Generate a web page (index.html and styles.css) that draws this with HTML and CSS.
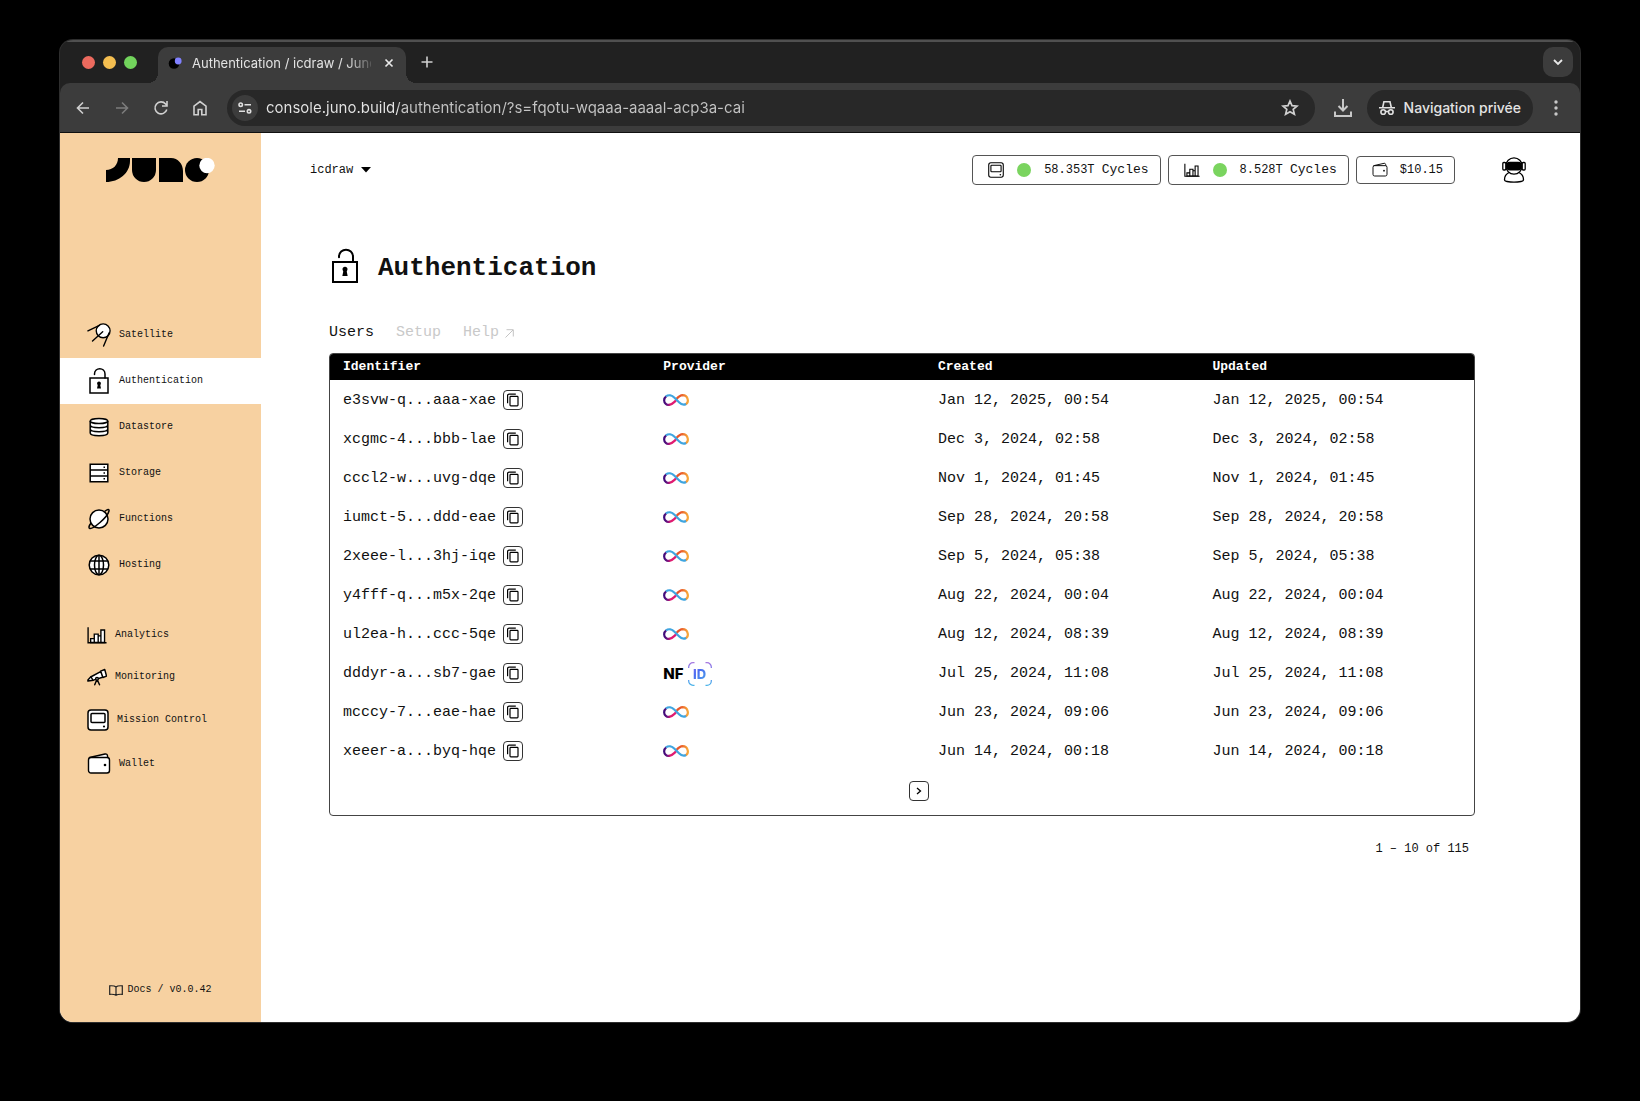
FILE: index.html
```html
<!DOCTYPE html>
<html lang="en">
<head>
<meta charset="utf-8">
<meta name="viewport" content="width=device-width, initial-scale=1">
<title>Authentication / icdraw / Juno</title>
<link rel="stylesheet" href="styles.css">
</head>
<body>
<svg class="defs" aria-hidden="true">
  <defs>
    <linearGradient id="g-pink" x1="0" y1="0" x2="1" y2="0"><stop offset="0" stop-color="#3b0a78"/><stop offset=".25" stop-color="#6a1280"/><stop offset=".55" stop-color="#e01b70"/></linearGradient>
    <linearGradient id="g-orange" x1="0" y1="0" x2="1" y2="0"><stop offset=".4" stop-color="#e8562a"/><stop offset="1" stop-color="#f7a83a"/></linearGradient>
    <linearGradient id="g-nfid" x1="0" y1="0" x2="0" y2="1"><stop offset="0" stop-color="#a678e0"/><stop offset=".45" stop-color="#4a6cf0"/><stop offset="1" stop-color="#4cb4e8"/></linearGradient>
  </defs>
  <symbol id="i-lock" viewBox="0 0 24 30"><path fill="#fff" d="M3 12h18v15H3z"/><path fill="none" stroke="#000" stroke-width="1.500" d="M3 12h18v15H3z"/><path fill="none" stroke="#000" stroke-width="1.500" stroke-linecap="round" d="M7.500 8.500V8c0-7 10.500-7 10.500 0v4"/><path d="M10.200 18a1.900 1.900 0 1 1 3.600 0l-.5 1.200 .7 3.300h-4l.7-3.300z"/></symbol>
  <symbol id="i-satellite" viewBox="0 0 26 26"><g stroke="#000" stroke-width="1.500" stroke-linecap="round" fill="none"><circle cx="17.500" cy="8.500" r="7.500" fill="#fff"/><path d="M1 8.500 13.500 2.500M6 19.500l11-10M18 25l6-14.500"/></g></symbol>
  <symbol id="i-data" viewBox="0 0 24 24"><path fill="#fff" d="M3 6v12c0 4 18 4 18 0V6c0-4-18-4-18 0z"/><g fill="none" stroke="#000" stroke-width="1.500"><ellipse cx="12" cy="6" rx="8.800" ry="2.600"/><path d="M3.200 6v12c0 3.500 17.600 3.500 17.600 0V6M3.200 10c0 3.500 17.600 3.500 17.600 0M3.200 14c0 3.500 17.600 3.500 17.600 0"/></g></symbol>
  <symbol id="i-storage" viewBox="0 0 24 24"><g fill="#fff" stroke="#000" stroke-width="1.500"><path d="M3.200 3.300h17.600v5.800H3.200zM3.200 9.100h17.600v5.800H3.200zM3.200 14.900h17.600v5.800H3.200z"/></g><path d="M16.500 5.500h1.500v1.500h-1.500zM16.500 11.300h1.500v1.500h-1.500zM16.500 17h1.500v1.500h-1.500z"/></symbol>
  <symbol id="i-planet" viewBox="0 0 24 24"><g stroke="#000" stroke-width="1.500" fill="none"><circle cx="12" cy="12" r="9" fill="#fff"/><path d="M17.500 4.500c3-2.500 5-2.700 4.500-.5-.8 3.500-5 8-9 11.500-4 3.400-8.500 6.500-10.200 6-1.500-.4-1-2.500 1.200-5.500"/></g></symbol>
  <symbol id="i-globe" viewBox="0 0 24 24"><g stroke="#000" stroke-width="1.500" fill="none"><circle cx="12" cy="12" r="9.800" fill="#fff"/><ellipse cx="12" cy="12" rx="4.500" ry="9.800"/><path d="M12 2.500v19M3.200 8h17.600M3.200 16h17.600"/></g></symbol>
  <symbol id="i-chart" viewBox="0 0 22 20"><g stroke="#000" stroke-width="1.500" fill="#fff"><path d="M4 14h4v4.200H4zM8 9h4.300v9.200H8zM12.300 11h3v7.200h-3zM15.300 4.500h4v13.700h-4z"/><path fill="none" d="M1.200 1.500v17H21.500"/></g></symbol>
  <symbol id="i-scope" viewBox="0 0 22 20"><g stroke="#000" stroke-width="1.600" stroke-linejoin="round" stroke-linecap="round" fill="#fff"><path d="M1 13.200 4 10l11-6 3 6-11 3.500-6 1z"/><path d="m15 3.500 4.500-1.700 2 7.200-4 1.500zM11 12.500l-2.500 6M11 12.500l2.800 6M4.500 10l2 3.500"/><circle cx="11" cy="12" r="1.500"/></g></symbol>
  <symbol id="i-mission" viewBox="0 0 22 22"><g stroke="#000" stroke-width="1.500" fill="#fff"><rect x="1" y="1" width="20" height="20" rx="3"/><rect x="4" y="4.500" width="14" height="9" rx="1"/></g><circle cx="17" cy="17.500" r="1.100"/></symbol>
  <symbol id="i-wallet" viewBox="0 0 24 24"><g stroke="#000" stroke-width="1.400" stroke-linejoin="round" fill="#fff"><path d="M2.500 5.500 18 2c1.500-.3 2.300.5 2.500 1.800l.5 3z"/><rect x="1.500" y="5.500" width="21" height="15.500" rx="2.500"/></g><circle cx="18" cy="13" r="1.300"/></symbol>
  <symbol id="i-copy" viewBox="0 0 14 14"><path fill="none" stroke="#000" stroke-width="1.200" d="M9.800 1.100H3.100a1.500 1.500 0 0 0-1.500 1.500v7.700"/><rect x="4" y="3.400" width="8" height="9.400" rx=".8" fill="none" stroke="#000" stroke-width="1.200"/></symbol>
  <symbol id="i-icp" viewBox="0 0 26 12"><g fill="none" stroke-width="2.200"><path stroke="url(#g-orange)" d="M13 5.500C16 2.200 17.800 1.200 19.500 1.200c6 .2 6.800 7.400 3 9"/><path stroke="url(#g-pink)" d="M3.200 2.300C.8 4.200.4 7.800 2.800 9.800c2.500 2 5.700 1 8.700-1.900l1.500-1.500"/><path stroke="#3fa5e0" d="M2.900 2.500C5.500.4 9 1.200 11.500 3.700l4.500 4.500c2 2 4.500 3.300 7 1.800"/></g></symbol>
</svg>

<div class="window">
  <div class="tabstrip">
    <div class="lights"><i class="red"></i><i class="yellow"></i><i class="green"></i></div>
    <div class="tab">
      <svg width="14" height="12" viewBox="0 0 14 12"><circle cx="6" cy="6.500" r="5.300"/><circle cx="10.200" cy="4" r="3.400" fill="#8080ff"/></svg>
      <span class="tab-title">Authentication / icdraw / Juno</span>
      <button class="bare" aria-label="Close tab"><svg width="10" height="10" viewBox="0 0 10 10"><path d="m1.500 1.500 7 7m0-7-7 7" stroke="#e8e8e8" stroke-width="1.700"/></svg></button>
    </div>
    <button class="bare new-tab" aria-label="New tab"><svg width="14" height="14" viewBox="0 0 14 14"><path d="M7 1.500v11M1.500 7h11" stroke="#d0d0d0" stroke-width="1.600"/></svg></button>
    <button class="tab-search" aria-label="Search tabs"><svg width="10" height="8" viewBox="0 0 10 8"><path d="m1 2 4 4 4-4" fill="none" stroke="#e8e8e8" stroke-width="1.800"/></svg></button>
  </div>
  <div class="toolbar">
    <div class="nav-icons">
      <button class="bare" aria-label="Back"><svg width="16" height="16" viewBox="0 0 16 16"><path d="M14 8H2.500M8 2.500 2.500 8 8 13.500" fill="none" stroke="#d0d0d0" stroke-width="1.600"/></svg></button>
      <button class="bare" aria-label="Forward"><svg width="16" height="16" viewBox="0 0 16 16"><path d="M2 8h11.500M8 2.500 13.500 8 8 13.500" fill="none" stroke="#7c7c7c" stroke-width="1.600"/></svg></button>
      <button class="bare" aria-label="Reload"><svg width="16" height="16" viewBox="0 0 16 16"><path d="M13.800 9.500A6 6 0 1 1 12.600 4L14 5.500M14 1v5H9" fill="none" stroke="#d0d0d0" stroke-width="1.600"/></svg></button>
      <button class="bare" aria-label="Home"><svg width="16" height="16" viewBox="0 0 16 16"><path d="M2 14.800V6.200l6-4.700 6 4.700v8.600H9.800V9.500H6.200v5.300z" fill="none" stroke="#d0d0d0" stroke-width="1.600"/></svg></button>
    </div>
    <div class="omnibox">
      <button class="site-info" aria-label="Site information"><svg width="14" height="12" viewBox="0 0 14 12"><g fill="none" stroke="#e0e0e0" stroke-width="1.600"><circle cx="2.700" cy="2.700" r="1.700"/><path d="M6.500 2.700H13M1 9.300h6"/><circle cx="11" cy="9.300" r="1.700"/></g></svg></button>
      <input class="url" type="text" aria-label="Address" value="console.juno.build/authentication/?s=fqotu-wqaaa-aaaal-acp3a-cai">
      <button class="bare" aria-label="Bookmark"><svg width="18" height="18" viewBox="0 0 18 18"><path d="m9 2 2 4.600 5 .5-3.800 3.300 1.200 4.900L9 12.700l-4.400 2.600 1.200-4.900L2 7.100l5-.5z" fill="none" stroke="#d0d0d0" stroke-width="1.700"/></svg></button>
    </div>
    <button class="bare download" aria-label="Downloads"><svg width="18" height="18" viewBox="0 0 18 18"><path d="M9 0v11M4.500 7 9 11.500 13.500 7M1 12.500V17h16v-4.500" fill="none" stroke="#c8c8c8" stroke-width="2"/></svg></button>
    <div class="private"><svg width="16" height="16" viewBox="0 0 16 16"><g fill="none" stroke="#e0e0e0" stroke-width="1.600"><path d="M0 7.800h16M3.700 7.500 4.900 1.800H11l1.300 5.700"/><circle cx="4.200" cy="12" r="2.300"/><circle cx="11.800" cy="12" r="2.300"/><path d="M6.500 11.500h3"/></g></svg><span>Navigation privée</span></div>
    <button class="bare" aria-label="Menu"><svg width="4" height="16" viewBox="0 0 4 16" fill="#c8c8c8"><circle cx="2" cy="2" r="1.700"/><circle cx="2" cy="8" r="1.700"/><circle cx="2" cy="14" r="1.700"/></svg></button>
  </div>

  <div class="page">
    <aside class="sidebar">
      <a class="logo" href="#" aria-label="Juno"><svg width="109" height="24" viewBox="0 0 109 24"><path d="M12 0h12v3C24 15 13 24 0 24V12c7 0 12-5 12-12zM26 0h24v12a12 12 0 0 1-24 0zM53 0h12c7 0 12 6 12 13v11H53z"/><circle cx="91" cy="12" r="12"/><circle cx="101" cy="7.500" r="7.700" fill="#fff"/></svg></a>
      <nav class="menu">
        <a href="#"><svg width="24" height="26"><use href="#i-satellite"/></svg>Satellite</a>
        <a href="#" class="active" aria-current="page"><svg width="24" height="30"><use href="#i-lock"/></svg>Authentication</a>
        <a href="#"><svg width="24" height="24"><use href="#i-data"/></svg>Datastore</a>
        <a href="#"><svg width="24" height="24"><use href="#i-storage"/></svg>Storage</a>
        <a href="#"><svg width="24" height="24"><use href="#i-planet"/></svg>Functions</a>
        <a href="#"><svg width="24" height="24"><use href="#i-globe"/></svg>Hosting</a>
      </nav>
      <nav class="menu secondary">
        <a href="#"><svg width="20" height="20"><use href="#i-chart"/></svg>Analytics</a>
        <a href="#"><svg width="20" height="20"><use href="#i-scope"/></svg>Monitoring</a>
        <a href="#"><svg width="22" height="22"><use href="#i-mission"/></svg>Mission Control</a>
        <a href="#"><svg width="24" height="24"><use href="#i-wallet"/></svg>Wallet</a>
      </nav>
      <div class="docs"><svg width="14" height="11" viewBox="0 0 14 11"><path d="M7 2v8.500M7 2C5.500.5 3.500.6.700.8v8.500c2.800-.2 4.800 0 6.300 1 1.500-1 3.500-1.200 6.300-1V.8C10.500.6 8.500.5 7 2z" fill="none" stroke="#222" stroke-width="1.200"/></svg><span><a href="#">Docs</a> / <a href="#">v0.0.42</a></span></div>
    </aside>

    <main class="content">
      <header class="topbar">
        <button class="bare switcher">icdraw <svg width="10" height="6" viewBox="0 0 10 6"><path d="M0 0h10L5 5.500z"/></svg></button>
        <div class="wallets">
          <a class="chip cycles" href="#"><svg width="16" height="16"><use href="#i-mission"/></svg><i class="dot"></i><span>58.353T <b>Cycles</b></span></a>
          <a class="chip cycles" href="#"><svg width="16" height="16"><use href="#i-chart"/></svg><i class="dot"></i><span>8.528T <b>Cycles</b></span></a>
          <a class="chip" href="#"><svg width="16" height="16"><use href="#i-wallet"/></svg><span>$10.15</span></a>
        </div>
        <button class="bare user" aria-label="User menu"><svg width="24" height="26" viewBox="0 0 24 26"><g fill="#fff" stroke="#000" stroke-width="1.300"><path d="M7 15.500c-3 1.500-4.500 4-4.500 7 0 1.300 1 1.800 2.500 2 4 .7 10 .7 14 0 1.500-.2 2.500-.7 2.500-2 0-3-1.500-5.500-4.500-7"/><circle cx="12" cy="9" r="8.200"/><rect x=".8" y="5.500" width="3" height="7.500" rx="1"/><rect x="20.200" y="5.500" width="3" height="7.500" rx="1"/></g><rect x="4" y="4.800" width="16" height="8.800" rx="4"/></svg></button>
      </header>

      <h1><svg width="32" height="40"><use href="#i-lock"/></svg>Authentication</h1>

      <nav class="tabs">
        <a href="#" class="on">Users</a>
        <a href="#">Setup</a>
        <a href="#">Help <svg width="9" height="9" viewBox="0 0 9 9"><path d="M.5 8.500 8 1M1.500.7h6.800v6.800" fill="none" stroke="#c4c4c4"/></svg></a>
      </nav>

      <div class="table-box">
        <table>
          <thead><tr><th class="wide">Identifier</th><th>Provider</th><th>Created</th><th>Updated</th></tr></thead>
          <tbody>
            <tr><td><span class="id">e3svw-q...aaa-xae<button class="sq" aria-label="Copy"><svg width="14" height="14"><use href="#i-copy"/></svg></button></span></td><td><svg class="icp" width="26" height="12"><use href="#i-icp"/></svg></td><td>Jan 12, 2025, 00:54</td><td>Jan 12, 2025, 00:54</td></tr>
            <tr><td><span class="id">xcgmc-4...bbb-lae<button class="sq" aria-label="Copy"><svg width="14" height="14"><use href="#i-copy"/></svg></button></span></td><td><svg class="icp" width="26" height="12"><use href="#i-icp"/></svg></td><td>Dec 3, 2024, 02:58</td><td>Dec 3, 2024, 02:58</td></tr>
            <tr><td><span class="id">cccl2-w...uvg-dqe<button class="sq" aria-label="Copy"><svg width="14" height="14"><use href="#i-copy"/></svg></button></span></td><td><svg class="icp" width="26" height="12"><use href="#i-icp"/></svg></td><td>Nov 1, 2024, 01:45</td><td>Nov 1, 2024, 01:45</td></tr>
            <tr><td><span class="id">iumct-5...ddd-eae<button class="sq" aria-label="Copy"><svg width="14" height="14"><use href="#i-copy"/></svg></button></span></td><td><svg class="icp" width="26" height="12"><use href="#i-icp"/></svg></td><td>Sep 28, 2024, 20:58</td><td>Sep 28, 2024, 20:58</td></tr>
            <tr><td><span class="id">2xeee-l...3hj-iqe<button class="sq" aria-label="Copy"><svg width="14" height="14"><use href="#i-copy"/></svg></button></span></td><td><svg class="icp" width="26" height="12"><use href="#i-icp"/></svg></td><td>Sep 5, 2024, 05:38</td><td>Sep 5, 2024, 05:38</td></tr>
            <tr><td><span class="id">y4fff-q...m5x-2qe<button class="sq" aria-label="Copy"><svg width="14" height="14"><use href="#i-copy"/></svg></button></span></td><td><svg class="icp" width="26" height="12"><use href="#i-icp"/></svg></td><td>Aug 22, 2024, 00:04</td><td>Aug 22, 2024, 00:04</td></tr>
            <tr><td><span class="id">ul2ea-h...ccc-5qe<button class="sq" aria-label="Copy"><svg width="14" height="14"><use href="#i-copy"/></svg></button></span></td><td><svg class="icp" width="26" height="12"><use href="#i-icp"/></svg></td><td>Aug 12, 2024, 08:39</td><td>Aug 12, 2024, 08:39</td></tr>
            <tr><td><span class="id">dddyr-a...sb7-gae<button class="sq" aria-label="Copy"><svg width="14" height="14"><use href="#i-copy"/></svg></button></span></td><td><span class="nfid">NF<span class="nfid-badge"><svg width="24" height="24" viewBox="0 0 24 24"><path d="M.7 6V5A4.300 4.300 0 0 1 5 .7h1.500M17.500.7H19A4.300 4.300 0 0 1 23.300 5v1M23.300 18v1a4.300 4.300 0 0 1-4.300 4.300h-1.500M6.500 23.300H5A4.300 4.300 0 0 1 .7 19v-1" fill="none" stroke="url(#g-nfid)" stroke-width="1.200"/></svg><span>ID</span></span></span></td><td>Jul 25, 2024, 11:08</td><td>Jul 25, 2024, 11:08</td></tr>
            <tr><td><span class="id">mcccy-7...eae-hae<button class="sq" aria-label="Copy"><svg width="14" height="14"><use href="#i-copy"/></svg></button></span></td><td><svg class="icp" width="26" height="12"><use href="#i-icp"/></svg></td><td>Jun 23, 2024, 09:06</td><td>Jun 23, 2024, 09:06</td></tr>
            <tr><td><span class="id">xeeer-a...byq-hqe<button class="sq" aria-label="Copy"><svg width="14" height="14"><use href="#i-copy"/></svg></button></span></td><td><svg class="icp" width="26" height="12"><use href="#i-icp"/></svg></td><td>Jun 14, 2024, 00:18</td><td>Jun 14, 2024, 00:18</td></tr>
          </tbody>
        </table>
        <div class="pager"><button class="sq" aria-label="Next page"><svg width="6" height="8" viewBox="0 0 6 8"><path d="m1 1 3.500 3L1 7" fill="none" stroke="#000" stroke-width="1.300"/></svg></button></div>
      </div>
      <p class="count">1 – 10 of 115</p>
    </main>
  </div>
</div>
</body>
</html>
```

FILE: styles.css
```css
* { box-sizing: border-box; }

body {
  margin: 0;
  padding: 40px 60px 79px;
  min-height: 100vh;
  display: flex;
  background: #000;
  color: #111;
  font: 15px/20px "Liberation Mono", monospace;
}

a { color: inherit; text-decoration: none; }
svg { display: block; flex: none; }
button { font: inherit; color: inherit; cursor: pointer; }
i, b { font-style: normal; font-weight: normal; }

.defs { position: absolute; width: 0; height: 0; }

.bare {
  display: flex;
  align-items: center;
  padding: 0;
  border: 0;
  background: none;
}

.window {
  flex: 1;
  min-width: 0;
  display: flex;
  flex-direction: column;
  border-radius: 13px;
  overflow: hidden;
  background: #212121;
  box-shadow: 0 0 0 1px #2e2e2e;
}

/* Browser chrome */
.tabstrip {
  display: flex;
  align-items: center;
  height: 43px;
  padding: 2px 7px 0 22px;
  border-top: 2px solid #505050;
  color: #e3e3e3;
  font: 13px/18px Inter, sans-serif;
}

.lights { display: flex; gap: 8px; margin-bottom: 2px; }
.lights i { width: 13px; height: 13px; border-radius: 50%; }
.red { background: #ec6a5e; }
.yellow { background: #f4be50; }
.green { background: #72d45c; }

.tab {
  position: relative;
  align-self: flex-end;
  display: flex;
  align-items: center;
  width: 248px;
  height: 36px;
  margin-left: 21px;
  padding: 0 12px 5px 10px;
  border-radius: 10px 10px 0 0;
  background: #3c3c3c;
}

.tab::before,
.tab::after {
  content: "";
  position: absolute;
  bottom: 0;
  width: 10px;
  height: 10px;
}

.tab::before { right: 100%; background: radial-gradient(circle at 0 0, #212121 10px, #3c3c3c 10px); }
.tab::after { left: 100%; background: radial-gradient(circle at 100% 0, #212121 10px, #3c3c3c 10px); }

.tab-title {
  flex: 1;
  min-width: 0;
  margin: 0 13px 0 10px;
  overflow: hidden;
  white-space: nowrap;
  -webkit-mask-image: linear-gradient(90deg, #000 155px, transparent 184px);
  mask-image: linear-gradient(90deg, #000 155px, transparent 184px);
}

.new-tab { margin: 0 auto 4px 14px; }

.tab-search {
  display: grid;
  place-items: center;
  width: 30px;
  height: 30px;
  margin-bottom: 4px;
  padding: 0;
  border: 0;
  border-radius: 10px;
  background: #3c3c3c;
}

.toolbar {
  display: flex;
  align-items: center;
  height: 50px;
  padding: 0 22px 0 15px;
  border-bottom: 1px solid #101010;
  border-radius: 10px 10px 0 0;
  background: #3c3c3c;
  color: #e3e3e3;
  font: 15px/20px Inter, sans-serif;
}

.nav-icons { display: flex; gap: 23px; margin-right: 19px; }

.omnibox {
  flex: 1;
  display: flex;
  align-items: center;
  height: 36px;
  padding: 0 16px 0 5px;
  border-radius: 18px;
  background: #282828;
}

.site-info {
  display: grid;
  place-items: center;
  width: 26px;
  height: 26px;
  padding: 0;
  border: 0;
  border-radius: 50%;
  background: #3c3c3c;
}

.url {
  flex: 1;
  min-width: 0;
  margin-left: 8px;
  padding: 0;
  border: 0;
  font: inherit;
  background: linear-gradient(90deg, #e6e6e6 132px, #c4c4c4 132px);
  -webkit-background-clip: text;
  background-clip: text;
  -webkit-text-fill-color: transparent;
}

.download { margin: 0 15px 0 19px; }

.private {
  display: flex;
  align-items: center;
  gap: 9px;
  height: 36px;
  margin-right: 21px;
  padding: 0 12px;
  border-radius: 18px;
  background: #282828;
  font-size: 14px;
  font-weight: 500;
}

/* Page */
.page {
  flex: 1;
  display: flex;
  background: #fff;
}

.sidebar {
  flex: none;
  display: flex;
  flex-direction: column;
  width: 201px;
  padding-top: 25px;
  background: #f7d1a1;
  font-size: 10px;
  line-height: 14px;
}

.logo { align-self: center; margin: 0 0 130px; }

.menu a {
  display: flex;
  align-items: center;
  gap: 8px;
  height: 46px;
  padding-left: 27px;
}

.menu .active { background: #fff; }
.menu.secondary { margin-top: 26px; }
.menu.secondary a { height: 44px; }
.menu.secondary a:nth-child(-n+2) { height: 42px; }

.docs {
  display: flex;
  align-items: center;
  justify-content: center;
  gap: 4px;
  margin-top: auto;
  padding-bottom: 25px;
}

.content {
  flex: 1;
  min-width: 0;
  padding: 22px 105px 40px 68px;
}

.topbar {
  display: flex;
  align-items: center;
  margin: 0 -51px 0 -19px;
  font-size: 12px;
}

.switcher { gap: 8px; }

.wallets {
  display: flex;
  align-items: center;
  gap: 7px;
  margin: 0 47px 0 auto;
}

.chip {
  display: flex;
  align-items: center;
  gap: 12px;
  height: 28px;
  padding: 0 11px 0 15px;
  border: 1px solid #555;
  border-radius: 4px;
}

.chip.cycles { gap: 13px; height: 30px; }
.chip b { font-size: 13px; }
.dot { width: 14px; height: 14px; border-radius: 50%; background: #7ad45f; }

h1 {
  display: flex;
  align-items: flex-start;
  gap: 17px;
  margin: 61px 0 0;
  font-size: 26px;
  line-height: 44px;
}

.tabs {
  display: flex;
  gap: 22px;
  margin: 33px 0 10px;
  color: #c9c9c9;
}

.tabs a { display: flex; align-items: center; gap: 6px; }
.tabs .on { color: #111; }

.table-box {
  border: 1px solid #444;
  border-radius: 4px;
  overflow: hidden;
}

table {
  width: 100%;
  table-layout: fixed;
  border-collapse: collapse;
}

th {
  height: 26px;
  padding: 0 0 0 13px;
  background: #000;
  color: #fff;
  font-size: 13px;
  text-align: left;
}

th.wide { width: 28%; }

td {
  height: 39px;
  padding: 2px 0 0 13px;
  white-space: nowrap;
}

.id { display: flex; align-items: center; gap: 7px; }
.id .sq, .icp { margin-bottom: 2px; }

.sq {
  display: grid;
  place-items: center;
  width: 20px;
  height: 20px;
  padding: 0;
  border: 1px solid #333;
  border-radius: 4px;
  background: #fff;
}

.nfid {
  display: flex;
  align-items: center;
  gap: 4px;
  color: #000;
  font: 800 15px/24px Inter, sans-serif;
}

.nfid-badge { display: grid; place-items: center; }
.nfid-badge > * { grid-area: 1 / 1; }

.nfid-badge span {
  font-size: 13px;
  font-weight: 800;
  background: linear-gradient(135deg, #8a6cf0, #4a6cf0 40%, #4cb4e8);
  -webkit-background-clip: text;
  background-clip: text;
  color: transparent;
}

.pager {
  display: flex;
  justify-content: center;
  padding: 11px 0 14px 34px;
}

.count {
  margin: 23px 6px 0 0;
  font-size: 12px;
  text-align: right;
}
```
